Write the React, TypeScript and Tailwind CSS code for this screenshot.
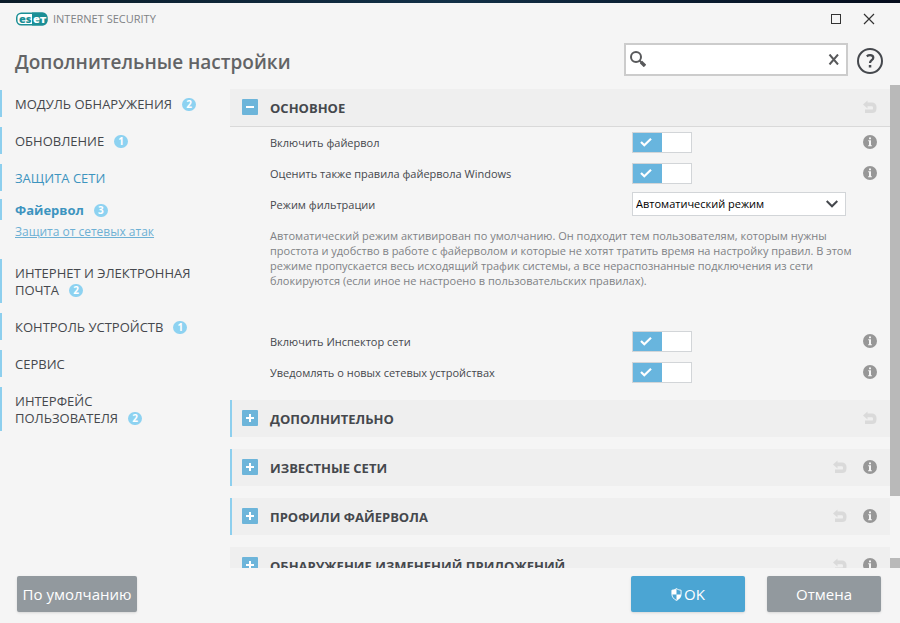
import type { ReactNode } from "react";

type NavItem = {
  label: ReactNode;
  count?: number;
  active?: boolean;
};

const navTop: NavItem[] = [
  { label: "МОДУЛЬ ОБНАРУЖЕНИЯ", count: 2 },
  { label: "ОБНОВЛЕНИЕ", count: 1 },
  { label: "ЗАЩИТА СЕТИ", active: true },
];

const navBottom: NavItem[] = [
  { label: <>ИНТЕРНЕТ И ЭЛЕКТРОННАЯ<br />ПОЧТА</>, count: 2 },
  { label: "КОНТРОЛЬ УСТРОЙСТВ", count: 1 },
  { label: "СЕРВИС" },
  { label: <>ИНТЕРФЕЙС<br />ПОЛЬЗОВАТЕЛЯ</>, count: 2 },
];

const collapsed = [
  { title: "ДОПОЛНИТЕЛЬНО", info: false, marked: true },
  { title: "ИЗВЕСТНЫЕ СЕТИ", info: true, marked: true },
  { title: "ПРОФИЛИ ФАЙЕРВОЛА", info: true, marked: true },
  { title: "ОБНАРУЖЕНИЕ ИЗМЕНЕНИЙ ПРИЛОЖЕНИЙ", info: true, marked: false },
];

function EsetLogo() {
  return (
    <svg aria-label="eset" role="img" className="h-[14px] w-8" viewBox="0 0 32 14">
      <rect x="0.75" y="1.25" width="30" height="11.5" rx="4.5" fill="#fff" stroke="#1b8f96" strokeWidth="1.5" />
      <path d="M16 .5h10.5a5 5 0 0 1 5 5v3a5 5 0 0 1-5 5H16z" fill="#1b8f96" />
      <g fontFamily="Open Sans, sans-serif" fontSize="11" fontWeight="800">
        <text x="3" y="10.5" fill="#1b8f96">es</text>
        <text x="17" y="10.5" fill="#fff">eт</text>
      </g>
    </svg>
  );
}

function InfoIcon() {
  return (
    <svg aria-hidden className="size-[14px]" viewBox="0 0 14 14">
      <circle cx="7" cy="7" r="7" fill="#979797" />
      <path d="M6 2.5h2v1.8H6zM5.2 5.3H8v5h.9v1H5.1v-1H6v-4h-.8z" fill="#f5f5f5" />
    </svg>
  );
}

function UndoIcon() {
  return (
    <svg aria-hidden className="size-[14px]" viewBox="0 0 14 14">
      <path d="M0 4.5 4.5.5v2h4.7A4.300 4.300 0 0 1 13.5 6.800v2A4.300 4.300 0 0 1 9.200 13H2V9.600h6.800a1.200 1.200 0 0 0 1.200-1.200v-.9a1.200 1.200 0 0 0-1.200-1.200H4.500v2.200z" fill="#dadada" />
    </svg>
  );
}

function Badge({ count }: { count: number }) {
  return (
    <span className="ml-[10px] inline-flex h-[13px] w-[14px] items-center justify-center rounded-full bg-[#8dd2f1] align-[1px] text-[10px] leading-none font-bold text-white">
      {count}
    </span>
  );
}

function NavEntry({ item }: { item: NavItem }) {
  return (
    <a
      href="#"
      className={`block border-l-2 border-[#8dcfee] pt-[6px] pb-1 pl-[13px] text-[13px] leading-[17px] ${
        item.active ? "text-[#3d94bf]" : "text-[#45484d]"
      }`}
    >
      {item.label}
      {item.count ? <Badge count={item.count} /> : null}
    </a>
  );
}

function IconButton({ label, children }: { label: string; children: ReactNode }) {
  return (
    <button type="button" aria-label={label} className="shrink-0">
      {children}
    </button>
  );
}

function SectionHeader({
  title,
  open = false,
  info = false,
  marked = false,
}: {
  title: string;
  open?: boolean;
  info?: boolean;
  marked?: boolean;
}) {
  return (
    <div
      className={`flex h-[37px] items-center gap-4 border-l-2 bg-[#efefef] pr-[13px] pb-px pl-[10px] ${
        marked ? "border-[#8dcfee]" : "border-[#efefef]"
      }`}
    >
      <button
        type="button"
        aria-expanded={open}
        className="flex flex-1 items-center gap-3 text-left text-[13px] font-bold text-[#45484d]"
      >
        <svg aria-hidden className="size-4" viewBox="0 0 16 16">
          <rect width="16" height="16" rx="1" fill="#6db5da" />
          <path d={open ? "M4 8h8" : "M4 8h8M8 4v8"} stroke="#fff" strokeWidth="2" />
        </svg>
        <span className="pt-[3px]">{title}</span>
      </button>
      <IconButton label="Вернуть"><UndoIcon /></IconButton>
      {info ? <IconButton label="Сведения"><InfoIcon /></IconButton> : null}
    </div>
  );
}

function ToggleRow({ id, label }: { id: string; label: string }) {
  return (
    <div className="flex h-[31px] items-center pr-[13px] pl-10 text-[11px] text-[#45484d]">
      <label htmlFor={id} className="w-[362px] pt-[2px]">{label}</label>
      <span className="relative flex">
        <input
          id={id}
          type="checkbox"
          defaultChecked
          className="peer h-[21px] w-[60px] appearance-none border border-[#d2d5d8] bg-white checked:bg-linear-to-r checked:from-[#68b5de] checked:from-50% checked:to-white checked:to-50%"
        />
        <svg
          aria-hidden
          className="pointer-events-none absolute top-1 left-2 hidden size-3 peer-checked:block"
          viewBox="0 0 12 12"
          fill="none"
        >
          <path d="M1 6l3.3 3.3L11 2.8" stroke="#fff" strokeWidth="2.2" />
        </svg>
      </span>
      <span className="ml-auto flex pb-[2px]">
        <IconButton label="Сведения"><InfoIcon /></IconButton>
      </span>
    </div>
  );
}

export default function App() {
  return (
    <div className="flex h-screen flex-col overflow-hidden bg-[#f5f5f5] font-['Open_Sans','Noto_Sans',sans-serif]">
      <div className="h-[3px] shrink-0 bg-linear-to-r from-[#0b1c29] via-[#123047] to-[#050c1c]" />

      <div className="flex h-8 shrink-0 items-center pr-[25px] pl-4">
        <EsetLogo />
        <span className="ml-[5px] text-[11px] text-[#808285]">INTERNET SECURITY</span>
        <div className="ml-auto flex items-center gap-[21px] text-[#333]">
          <button type="button" aria-label="Развернуть">
            <svg aria-hidden className="size-[11px]" viewBox="0 0 11 11">
              <rect x="0.5" y="0.5" width="9" height="9" fill="none" stroke="currentColor" />
            </svg>
          </button>
          <button type="button" aria-label="Закрыть">
            <svg aria-hidden className="size-3" viewBox="0 0 12 12">
              <path d="M1 1l10 10M11 1L1 11" stroke="currentColor" strokeWidth="1.2" />
            </svg>
          </button>
        </div>
      </div>

      <header className="flex h-[50px] shrink-0 items-center pr-[17px] pb-px pl-[15px]">
        <h1 className="pt-[5px] text-[19px] font-semibold text-[#636466]">Дополнительные настройки</h1>
        <div className="ml-auto flex h-[33px] w-[224px] items-center border-2 border-[#cccccc] bg-white pr-[6px] pb-px pl-1">
          <svg aria-hidden className="size-4 shrink-0" viewBox="0 0 16 16" fill="none" stroke="#58595b">
            <circle cx="6" cy="6" r="5" strokeWidth="2" />
            <path d="M9.5 9.5l2 2" strokeWidth="2" />
            <path d="M11 11l4 4" strokeWidth="3.4" />
          </svg>
          <input type="text" aria-label="Поиск" className="min-w-0 flex-1 px-2 text-[13px] outline-none" />
          <button type="button" aria-label="Очистить">
            <svg aria-hidden className="h-[11px] w-3" viewBox="0 0 12 11">
              <path d="M1.5.5l8.5 10M10 .5l-8.5 10" stroke="#58595b" strokeWidth="2" />
            </svg>
          </button>
        </div>
        <button type="button" aria-label="Справка" className="mt-[2px] ml-[9px]">
          <svg aria-hidden className="size-[26px]" viewBox="0 0 26 26" fill="none" stroke="#45484d">
            <circle cx="13" cy="13" r="12" strokeWidth="2" />
            <path d="M9.8 8.4c1-.9 2.1-1.2 3.3-1.2 2 0 3.2 1 3.2 2.6 0 2.4-3.3 2.5-3.3 5.2" strokeWidth="2.2" />
            <path d="M11.8 17h2.5v2.5h-2.5z" fill="#45484d" stroke="none" />
          </svg>
        </button>
      </header>

      <div className="flex min-h-0 flex-1">
        <nav className="w-[230px] shrink-0 pt-[5px]">
          <div className="flex flex-col gap-[10px]">
            {navTop.map((item, i) => (
              <NavEntry key={i} item={item} />
            ))}
          </div>
          <a
            href="#"
            className="mt-2 block border-l-2 border-[#8dcfee] pt-px pl-[13px] text-[13px] leading-5 font-bold text-[#3d94bf]"
          >
            Файервол
            <Badge count={3} />
          </a>
          <a
            href="#"
            className="mt-[3px] mb-[18px] ml-[15px] block text-[12px] leading-[18px] text-[#6db0d4] underline"
          >
            Защита от сетевых атак
          </a>
          <div className="flex flex-col gap-[10px]">
            {navBottom.map((item, i) => (
              <NavEntry key={i} item={item} />
            ))}
          </div>
        </nav>

        <main className="min-w-0 flex-1 overflow-hidden pt-1">
          <section>
            <SectionHeader title="ОСНОВНОЕ" open />
            <div className="border-t border-[#d9d9d9]">
              <ToggleRow id="firewall" label="Включить файервол" />
              <ToggleRow id="windows-rules" label="Оценить также правила файервола Windows" />
              <div className="flex h-[31px] items-center pb-px pl-10 text-[11px] text-[#45484d]">
                <label htmlFor="mode" className="w-[362px] pt-[2px]">Режим фильтрации</label>
                <span className="relative flex">
                  <select
                    id="mode"
                    className="h-6 w-[214px] appearance-none border border-[#d2d5d8] bg-white px-[3px] text-[11px] text-black"
                  >
                    <option>Автоматический режим</option>
                    <option>Интерактивный режим</option>
                  </select>
                  <svg
                    aria-hidden
                    className="pointer-events-none absolute top-2 right-2 h-2 w-3"
                    viewBox="0 0 12 8"
                    fill="none"
                  >
                    <path d="M.7 1L6 6.3 11.3 1" stroke="#45484d" strokeWidth="2" />
                  </svg>
                </span>
              </div>
              <p className="mt-2 mb-[38px] pr-4 pl-10 text-[11px] leading-[15px] text-[#808285]">
                Автоматический режим активирован по умолчанию. Он подходит тем пользователям, которым нужны
                простота и удобство в работе с файерволом и которые не хотят тратить время на настройку правил. В этом
                режиме пропускается весь исходящий трафик системы, а все нераспознанные подключения из сети
                блокируются (если иное не настроено в пользовательских правилах).
              </p>
              <ToggleRow id="inspector" label="Включить Инспектор сети" />
              <ToggleRow id="notify" label="Уведомлять о новых сетевых устройствах" />
            </div>
          </section>
          <div className="mt-3 flex flex-col gap-3">
            {collapsed.map((section) => (
              <SectionHeader key={section.title} {...section} />
            ))}
          </div>
        </main>

        <div aria-hidden className="flex w-[10px] shrink-0 flex-col justify-between">
          <div className="h-[85%] bg-[#b9b9b9]" />
          <div className="h-[10px] bg-[#b9b9b9]" />
        </div>
      </div>

      <footer className="flex h-[55px] shrink-0 items-center gap-[22px] pr-[19px] pb-[3px] pl-[17px] text-[15px] text-white">
        <button type="button" className="mr-auto h-9 w-[120px] rounded-[2px] bg-[#92999e] whitespace-nowrap shadow-sm">
          По умолчанию
        </button>
        <button
          type="button"
          className="flex h-9 w-[114px] items-center justify-center gap-[2px] rounded-[2px] bg-[#4ba5d3] shadow-sm"
        >
          <svg aria-hidden className="mt-px h-[13px] w-[11px]" viewBox="0 0 12 14">
            <path d="M6 .5C4.5 1.7 2.8 2.2 1 2.3v4.4c0 3 2 5.3 5 6.8 3-1.5 5-3.8 5-6.8V2.3C9.2 2.2 7.5 1.7 6 .5z" fill="none" stroke="#fff" />
            <path d="M6 .5C4.5 1.7 2.8 2.2 1 2.3V7h5zM6 7h5c0 3-2 5-5 6.5z" fill="#fff" />
          </svg>
          OK
        </button>
        <button type="button" className="h-9 w-[114px] rounded-[2px] bg-[#92999e] shadow-sm">
          Отмена
        </button>
      </footer>
    </div>
  );
}
